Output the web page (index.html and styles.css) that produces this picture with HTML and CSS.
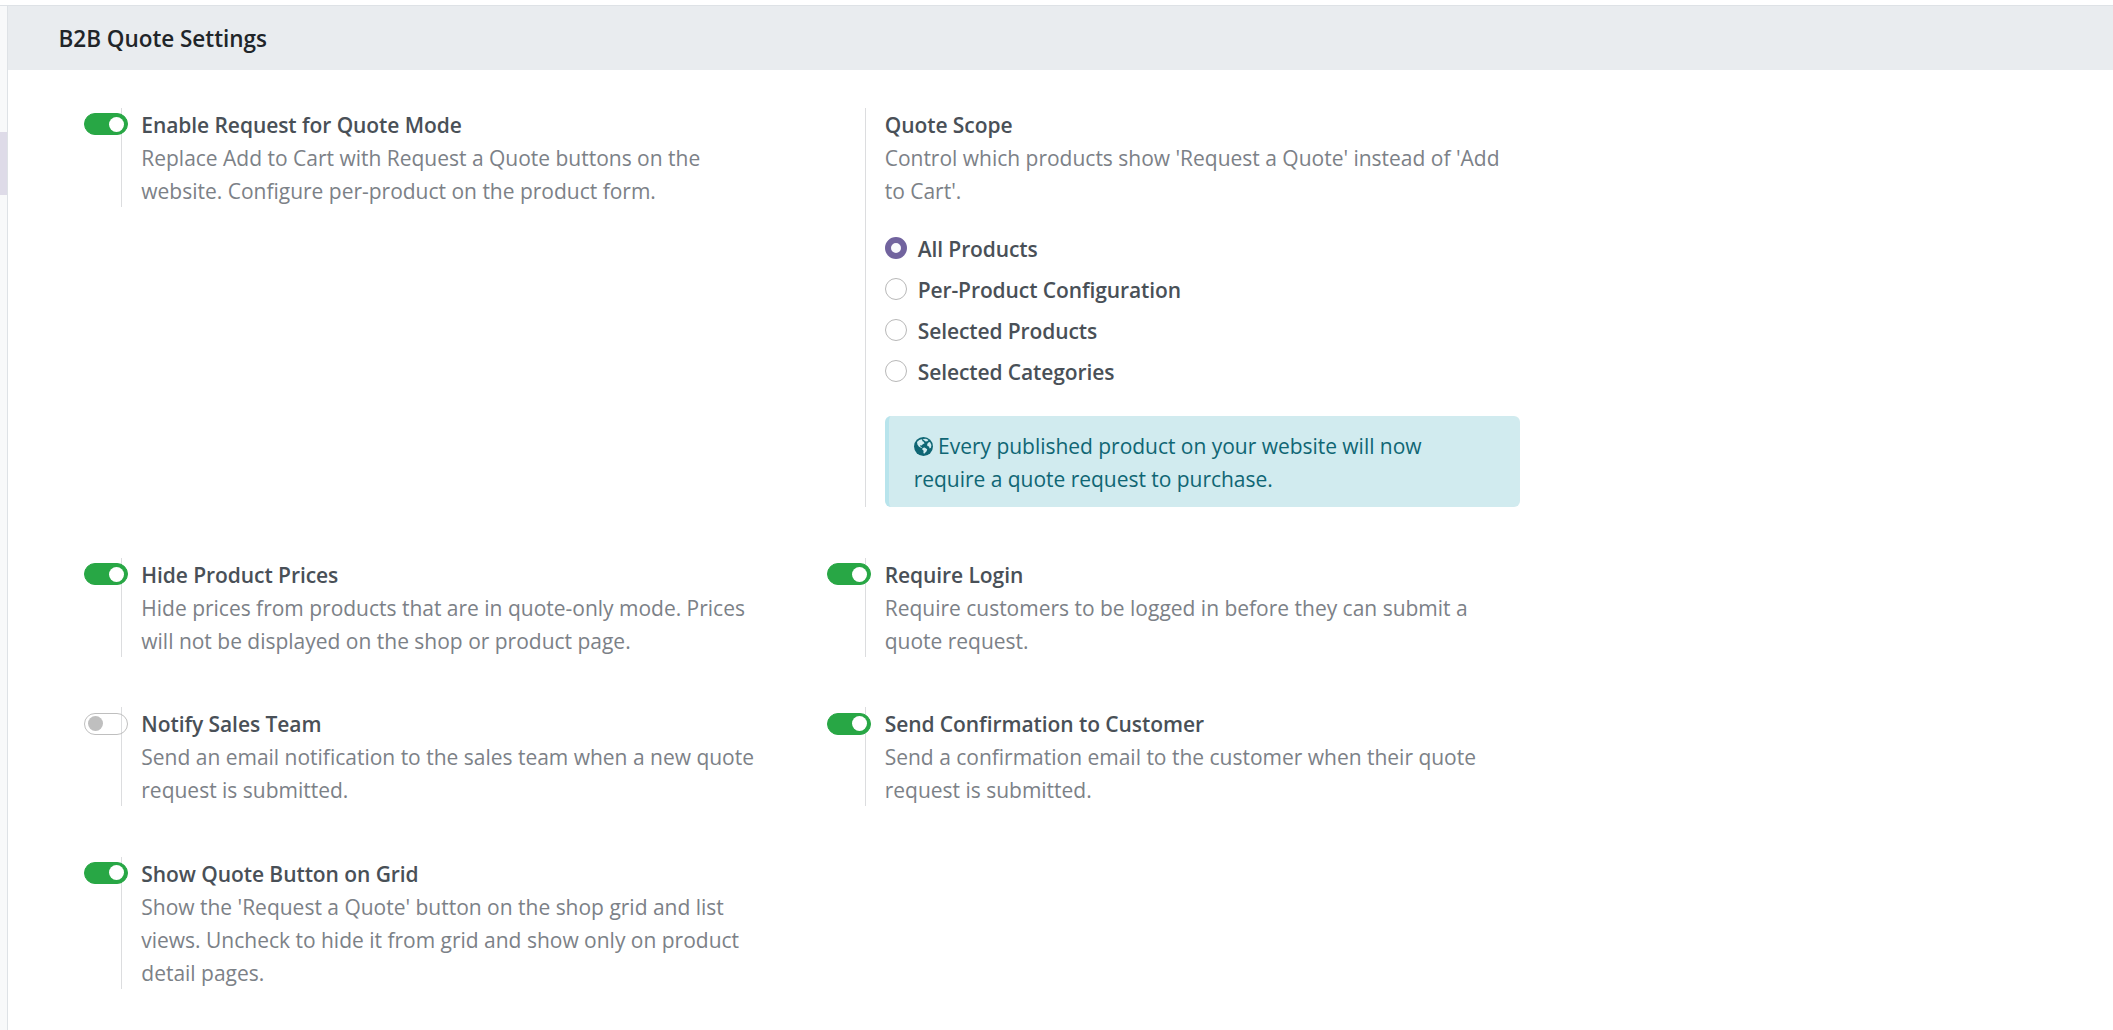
FILE: index.html
```
<!DOCTYPE html>
<html lang="en">
<head>
    <meta charset="UTF-8">
    <meta name="viewport" content="width=device-width, initial-scale=1.0">
    <title>B2B Quote Settings</title>
    <link rel="stylesheet" href="styles.css">
</head>
<body>
    <div class="page">
        <div class="sidebar">
            <div class="sidebar-active"></div>
        </div>
        <div class="content">
            <h2 class="title">B2B Quote Settings</h2>

            <div class="settings">
                <div class="setting">
                    <div class="left"><span class="switch on"></span></div>
                    <div class="right">
                        <label class="name">Enable Request for Quote Mode</label>
                        <div class="muted">Replace Add to Cart with Request a Quote buttons on the<br>website. Configure per-product on the product form.</div>
                    </div>
                </div>

                <div class="setting">
                    <div class="left"></div>
                    <div class="right">
                        <label class="name">Quote Scope</label>
                        <div class="muted">Control which products show 'Request a Quote' instead of 'Add<br>to Cart'.</div>
                        <div class="radios">
                            <label class="radio"><span class="dot checked"></span>All Products</label>
                            <label class="radio"><span class="dot"></span>Per-Product Configuration</label>
                            <label class="radio"><span class="dot"></span>Selected Products</label>
                            <label class="radio"><span class="dot"></span>Selected Categories</label>
                        </div>
                        <div class="alert">
                            <svg class="globe" viewBox="0 0 19 19"><circle cx="9.5" cy="9.5" r="9.5" fill="#0f6674"/><path d="M3 5L5.2 3L7.4 2.2L8.6 3L8 4L9.4 4.4L10.6 6.2L8.8 7.2L7.6 8.4L6 8.2L6.4 9.6L8 10.4L7.6 11L5 9.8L3.4 7.6Z" fill="#d1ebef"/><path d="M8.6 2L12 1.8L14.4 3L13.4 4.2L11.6 4.6L10.4 3.4Z" fill="#d1ebef"/><path d="M8.6 11L10.6 10.6L13.2 12.2L12.6 14.2L10.2 16.8L9.4 16L9.6 13.8L8.2 12.4Z" fill="#d1ebef"/><path d="M13.2 7L14.4 5.6L16 5L17.4 8L17 10.8L15.6 11.4L15 9.6L13.4 9Z" fill="#d1ebef"/></svg>
                            Every published product on your website will now<br>require a quote request to purchase.
                        </div>
                    </div>
                </div>

                <div class="setting">
                    <div class="left"><span class="switch on"></span></div>
                    <div class="right">
                        <label class="name">Hide Product Prices</label>
                        <div class="muted">Hide prices from products that are in quote-only mode. Prices<br>will not be displayed on the shop or product page.</div>
                    </div>
                </div>

                <div class="setting">
                    <div class="left"><span class="switch on"></span></div>
                    <div class="right">
                        <label class="name">Require Login</label>
                        <div class="muted">Require customers to be logged in before they can submit a<br>quote request.</div>
                    </div>
                </div>

                <div class="setting">
                    <div class="left"><span class="switch"></span></div>
                    <div class="right">
                        <label class="name">Notify Sales Team</label>
                        <div class="muted">Send an email notification to the sales team when a new quote<br>request is submitted.</div>
                    </div>
                </div>

                <div class="setting">
                    <div class="left"><span class="switch on"></span></div>
                    <div class="right">
                        <label class="name">Send Confirmation to Customer</label>
                        <div class="muted">Send a confirmation email to the customer when their quote<br>request is submitted.</div>
                    </div>
                </div>

                <div class="setting">
                    <div class="left"><span class="switch on"></span></div>
                    <div class="right">
                        <label class="name">Show Quote Button on Grid</label>
                        <div class="muted">Show the 'Request a Quote' button on the shop grid and list<br>views. Uncheck to hide it from grid and show only on product<br>detail pages.</div>
                    </div>
                </div>
            </div>
        </div>
    </div>
</body>
</html>
```
FILE: styles.css
```
* {
    box-sizing: border-box;
}

body {
    margin: 0;
    padding-top: 5px;
    height: 1030px;
    overflow: hidden;
    background-color: #fff;
    color: #495057;
    font-family: "Segoe UI", "Open Sans", "Noto Sans", sans-serif;
    font-size: 21px;
    line-height: 33px;
    letter-spacing: -0.03px;
}

.page {
    display: flex;
    height: 1025px;
    border-top: 1px solid #dee2e6;
}

.sidebar {
    flex: none;
    width: 8px;
    padding-top: 126px;
    background-color: #f8f9fa;
    border-right: 1px solid #dee2e6;
}

.sidebar-active {
    height: 63px;
    background-color: #dedbe8;
}

.content {
    flex: 1;
}

.title {
    margin: 0;
    padding: 0 0 0 50.5px;
    height: 64px;
    line-height: 66px;
    background-color: #e9ecef;
    color: #212529;
    font-size: 22.5px;
    font-weight: 600;
}

.settings {
    display: grid;
    grid-template-columns: 743.4px 700px;
    align-items: start;
    row-gap: 50.4px;
    padding: 38px 0 0 76px;
}

.setting {
    display: flex;
}

.left {
    flex: none;
    width: 37.3px;
    padding-top: 5.4px;
}

.right {
    width: 656px;
    padding-left: 19px;
    border-left: 1px solid #dcdddf;
}

/* toggle switch */
.switch {
    display: block;
    position: relative;
    width: 44px;
    height: 22px;
    border: 1px solid #bfbfbf;
    border-radius: 11px;
}

.switch::after {
    content: "";
    position: absolute;
    top: 2.5px;
    left: 2.5px;
    width: 15px;
    height: 15px;
    border-radius: 50%;
    background-color: #bfbfbf;
}

.switch.on {
    border-color: #28a745;
    background-color: #28a745;
}

.switch.on::after {
    left: 24px;
    background-color: #fff;
}

.name {
    display: block;
    padding-top: 1px;
    font-weight: 600;
    letter-spacing: -0.07px;
}

.muted {
    margin-bottom: -1px;
    color: #7c8187;
    letter-spacing: -0.01px;
}

/* radio list */
.radios {
    margin-top: 21px;
}

.radio {
    display: flex;
    height: 41px;
    line-height: 43px;
    font-weight: 600;
    letter-spacing: -0.1px;
}

.dot {
    width: 22px;
    height: 22px;
    margin: 9px 11px 0 0;
    border: 1px solid #b8b8b8;
    border-radius: 50%;
}

.dot.checked {
    border: 6px solid #71639e;
    background-color: #f8f8fc;
}

.alert {
    margin-top: 24.4px;
    height: 91px;
    width: 635px;
    padding: 14px 25px 0;
    border-left: 4px solid #b8e4ec;
    border-radius: 6px;
    background-color: #d1ebef;
    color: #0f6674;
}

.globe {
    width: 19px;
    height: 19px;
    vertical-align: -2px;
}
```
